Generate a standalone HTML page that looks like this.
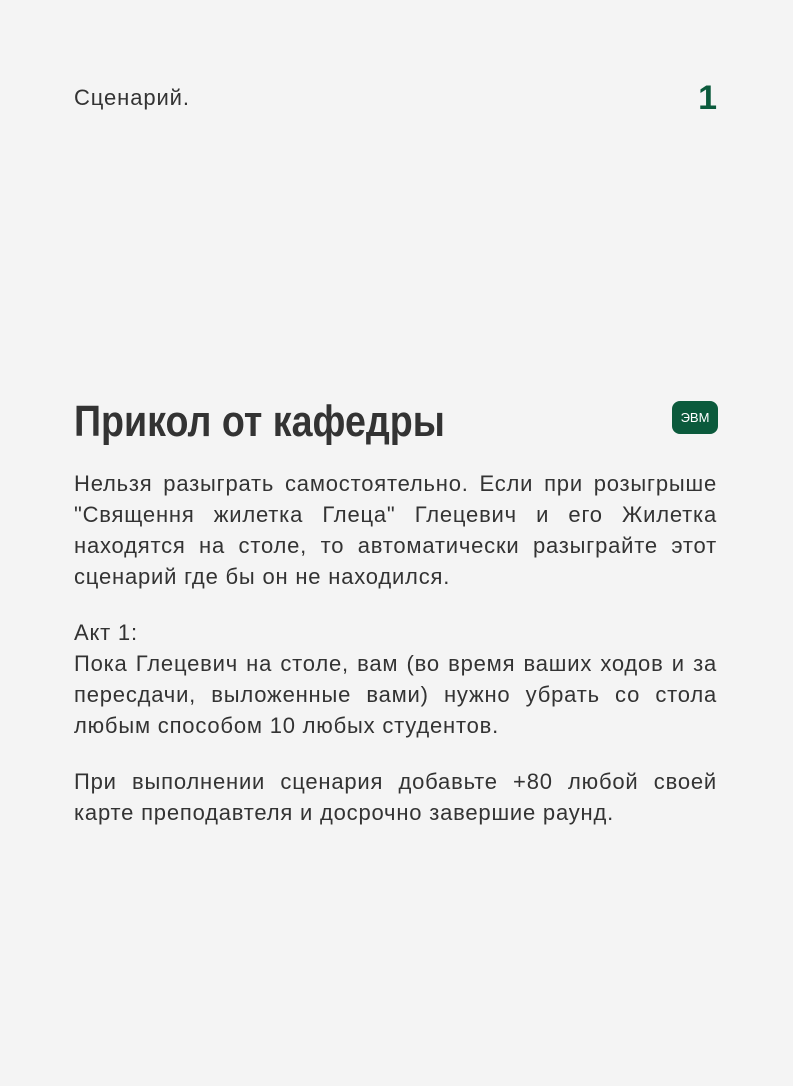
<!DOCTYPE html>
<html><head><meta charset="utf-8"><style>
html,body{margin:0;padding:0;background:#f4f4f4;}
body{width:793px;height:1086px;position:relative;overflow:hidden;font-family:"Liberation Sans",sans-serif;color:#333;}
.hdr{position:absolute;left:74px;top:83px;font-size:22px;line-height:30px;letter-spacing:0.9px;}
.num{position:absolute;right:76px;top:78px;font-size:34px;font-weight:bold;color:#0b5a3c;line-height:40px;}
h1{position:absolute;left:74px;top:397px;margin:0;font-size:44px;line-height:50px;font-weight:bold;color:#333;transform:scaleX(0.855);transform-origin:0 0;white-space:nowrap;}
.badge{position:absolute;left:672px;top:401px;width:46px;height:33px;background:#0b5a3c;border-radius:8px;color:#fff;font-size:13px;line-height:33px;text-align:center;}
.body{position:absolute;left:74px;top:468px;width:643px;font-size:22px;line-height:31px;text-align:justify;letter-spacing:0.8px;}
.body p{margin:0 0 25px 0;}
</style></head><body>
<div class="hdr">Сценарий.</div>
<div class="num">1</div>
<h1>Прикол от кафедры</h1>
<div class="badge">ЭВМ</div>
<div class="body">
<p>Нельзя разыграть самостоятельно. Если при розыгрыше "Священня жилетка Глеца" Глецевич и его Жилетка находятся на столе, то автоматически разыграйте этот сценарий где бы он не находился.</p>
<p>Акт 1:<br>Пока Глецевич на столе, вам (во время ваших ходов и за пересдачи, выложенные вами) нужно убрать со стола любым способом 10 любых студентов.</p>
<p>При выполнении сценария добавьте +80 любой своей карте преподавтеля и досрочно завершие раунд.</p>
</div>
</body></html>
